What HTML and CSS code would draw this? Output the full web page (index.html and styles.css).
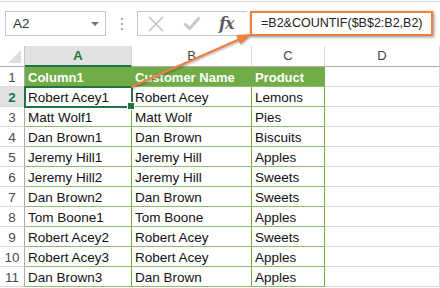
FILE: index.html
```html
<!DOCTYPE html>
<html lang="en">
  <head>
    <meta charset="UTF-8" />
    <title>COUNTIF unique names</title>
    <link rel="stylesheet" href="styles.css">
  </head>
  <body>
    <div class="toolbar">
      <div class="namebox">
        <span>A2</span>
        <span class="dropdown"></span>
      </div>
      <div class="grip"><i></i><i></i><i></i></div>
      <div class="fbuttons">
        <svg class="icon-cancel" width="18" height="16" viewBox="0 0 18 16">
          <path d="M2 1 L16 15 M16 1 L2 15" stroke="#c3c3c3" stroke-width="1.6" fill="none" />
        </svg>
        <svg class="icon-enter" width="18" height="15" viewBox="0 0 18 15">
          <path d="M1.5 7.5 L6.5 12.5 L16.5 1.5" stroke="#c8c8c8" stroke-width="3" fill="none" />
        </svg>
        <span class="fx">fx</span>
      </div>
      <div class="formula">=B2&amp;COUNTIF($B$2:B2,B2)</div>
    </div>

    <div class="sheet">
      <div class="corner"></div>
      <div class="colhead active">A</div>
      <div class="colhead">B</div>
      <div class="colhead">C</div>
      <div class="colhead">D</div>

      <div class="rowhead">1</div>
      <div class="cell th">Column1</div>
      <div class="cell th">Customer Name</div>
      <div class="cell th">Product</div>
      <div class="cell empty"></div>

      <div class="rowhead active">2</div>
      <div class="cell sel">Robert Acey1</div>
      <div class="cell">Robert Acey</div>
      <div class="cell">Lemons</div>
      <div class="cell empty"></div>

      <div class="rowhead">3</div>
      <div class="cell">Matt Wolf1</div>
      <div class="cell">Matt Wolf</div>
      <div class="cell">Pies</div>
      <div class="cell empty"></div>

      <div class="rowhead">4</div>
      <div class="cell">Dan Brown1</div>
      <div class="cell">Dan Brown</div>
      <div class="cell">Biscuits</div>
      <div class="cell empty"></div>

      <div class="rowhead">5</div>
      <div class="cell">Jeremy Hill1</div>
      <div class="cell">Jeremy Hill</div>
      <div class="cell">Apples</div>
      <div class="cell empty"></div>

      <div class="rowhead">6</div>
      <div class="cell">Jeremy Hill2</div>
      <div class="cell">Jeremy Hill</div>
      <div class="cell">Sweets</div>
      <div class="cell empty"></div>

      <div class="rowhead">7</div>
      <div class="cell">Dan Brown2</div>
      <div class="cell">Dan Brown</div>
      <div class="cell">Sweets</div>
      <div class="cell empty"></div>

      <div class="rowhead">8</div>
      <div class="cell">Tom Boone1</div>
      <div class="cell">Tom Boone</div>
      <div class="cell">Apples</div>
      <div class="cell empty"></div>

      <div class="rowhead">9</div>
      <div class="cell">Robert Acey2</div>
      <div class="cell">Robert Acey</div>
      <div class="cell">Sweets</div>
      <div class="cell empty"></div>

      <div class="rowhead">10</div>
      <div class="cell">Robert Acey3</div>
      <div class="cell">Robert Acey</div>
      <div class="cell">Apples</div>
      <div class="cell empty"></div>

      <div class="rowhead">11</div>
      <div class="cell">Dan Brown3</div>
      <div class="cell">Dan Brown</div>
      <div class="cell">Apples</div>
      <div class="cell empty"></div>
    </div>

    <!-- callout arrow from A2 to the formula -->
    <svg class="callout" width="440" height="288" viewBox="0 0 440 288">
      <line x1="131" y1="87" x2="240" y2="39" stroke="#f07f3a" stroke-width="2" />
      <polygon points="252,34 240.2,44.3 236.2,35.1" fill="#f07f3a" />
    </svg>
  </body>
</html>
```

FILE: styles.css
```css
/* base */
* {
  margin: 0;
  padding: 0;
  box-sizing: border-box;
}

body {
  position: relative;
  width: 440px;
  height: 288px;
  overflow: hidden;
  background-color: white;
  font-family: "Liberation Sans", Arial, sans-serif;
  color: #222;
}

/* formula bar */
.toolbar {
  display: flex;
  align-items: flex-start;
  height: 45px;
  margin-top: 1px;
  padding: 9px 0 0 5px;
  border-top: 1px solid #d4d4d4;
}

.namebox {
  display: flex;
  align-items: center;
  justify-content: space-between;
  width: 101px;
  height: 25px;
  padding: 0 6px 0 7px;
  border: 1px solid #c6c6c6;
  font-size: 13.5px;
  color: #333;
}

.dropdown {
  width: 0;
  height: 0;
  border-left: 4px solid transparent;
  border-right: 4px solid transparent;
  border-top: 4px solid #707070;
}

.grip {
  display: flex;
  flex-direction: column;
  justify-content: center;
  gap: 3px;
  height: 25px;
  margin-left: 15px;
}

.grip i {
  display: block;
  width: 2px;
  height: 2px;
  background-color: #a6a6a6;
}

.fbuttons {
  display: flex;
  align-items: center;
  width: 110px;
  height: 25px;
  margin-left: 14px;
  padding-left: 9px;
  border: 1px solid #c6c6c6;
  border-right: none;
}

.icon-enter {
  margin-left: 18px;
}

.fx {
  margin-left: 18px;
  font-family: "DejaVu Serif", "Liberation Serif", serif;
  font-style: italic;
  font-weight: bold;
  font-size: 16px;
  color: #5c5c5c;
  letter-spacing: -1px;
}

.formula {
  width: 183px;
  height: 25px;
  margin-left: 3px;
  padding-left: 9px;
  border: 2.5px solid #f07f3a;
  box-shadow: 1px 1px 3px rgba(0, 0, 0, 0.45);
  font-size: 12.5px;
  line-height: 20px;
  color: #222;
  white-space: nowrap;
}

/* worksheet */
.sheet {
  display: grid;
  grid-template-columns: 25px 107px 120px 73px 115px;
  grid-template-rows: 21px;
  grid-auto-rows: 20px;
}

.corner {
  position: relative;
  border-right: 1px solid #c6c6c6;
  border-bottom: 1px solid #ababab;
}

.corner::after {
  content: "";
  position: absolute;
  right: 3px;
  bottom: 3px;
  width: 0;
  height: 0;
  border-left: 13px solid transparent;
  border-bottom: 13px solid #dcdcdc;
}

.colhead {
  border-right: 1px solid #d6d6d6;
  border-bottom: 1px solid #ababab;
  text-align: center;
  font-size: 13px;
  line-height: 20px;
  color: #444;
}

.colhead.active {
  background-color: #e1e1e1;
  border-bottom: 2px solid #217346;
  color: #217346;
  font-weight: bold;
}

.rowhead {
  border-right: 1px solid #ababab;
  border-bottom: 1px solid #dadada;
  text-align: center;
  font-size: 13.5px;
  padding-top: 2px;
  line-height: 17px;
  color: #4a4a4a;
}

.rowhead.active {
  background-color: #e1e1e1;
  color: #217346;
  font-weight: bold;
}

.cell {
  padding: 2px 3px 0;
  border-right: 1px solid #70ad47;
  border-bottom: 1px solid #8cbd6a;
  font-size: 13.5px;
  line-height: 17px;
  color: #111;
  white-space: nowrap;
  overflow: hidden;
}

.cell.th {
  background-color: #70ad47;
  color: white;
  font-weight: bold;
  font-size: 13px;
}

.cell.empty {
  border-right: 1px solid #dadada;
  border-bottom: 1px solid #dadada;
}

.cell.sel {
  position: relative;
  overflow: visible;
}

.cell.sel::before {
  content: "";
  position: absolute;
  left: -1px;
  top: -1px;
  right: -2px;
  bottom: -2px;
  border: 2px solid #217346;
}

.cell.sel::after {
  content: "";
  position: absolute;
  right: -4px;
  bottom: -4px;
  width: 6px;
  height: 6px;
  background-color: #217346;
  border: 1px solid white;
}

/* callout */
.callout {
  position: absolute;
  left: 0;
  top: 0;
  filter: drop-shadow(1px 1px 1px rgba(0, 0, 0, 0.35));
}
```
